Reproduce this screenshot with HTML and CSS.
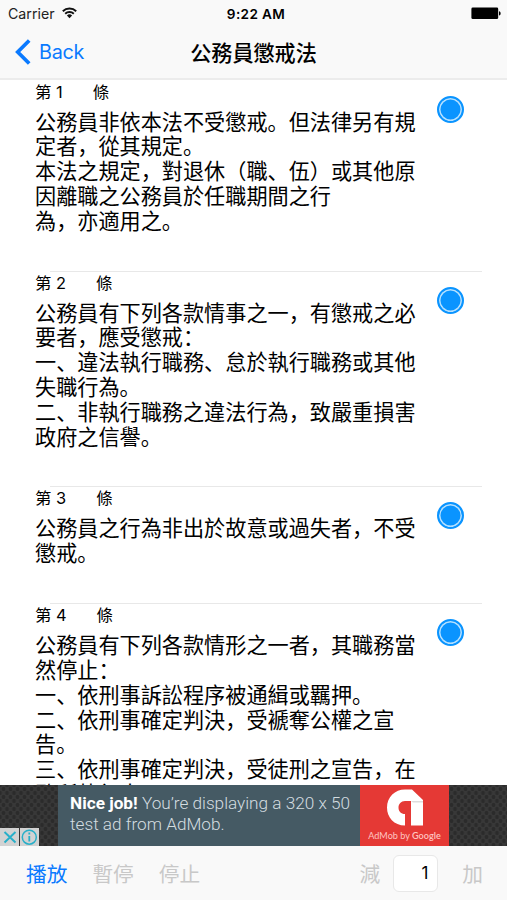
FILE: index.html
```
<!DOCTYPE html>
<html lang="zh-Hans">
<head>
  <meta charset="UTF-8">
  <meta name="viewport" content="width=device-width, initial-scale=1.0">
  <title>公務員懲戒法</title>
  <link rel="stylesheet" href="styles.css">
</head>
<body>

  <div class="app">
      <header class="header">
          <div class="status-bar">
              <div class="carrier">
                  <span>Carrier</span>
                  <svg class="wifi" width="15" height="12" viewBox="0 0 15 12">
                      <path d="M.8 4.2a9.6 9.6 0 0 1 13.4 0M3.2 6.7a6.2 6.2 0 0 1 8.6 0" fill="none" stroke="#111" stroke-width="1.9"/>
                      <path d="M4.9 8.5a3.8 3.8 0 0 1 5.2 0L7.5 11.3z" fill="#111"/>
                  </svg>
              </div>
              <span class="time">9:22 AM</span>
              <svg class="battery" width="30" height="13" viewBox="0 0 30 13">
                  <rect x=".4" y=".5" width="26.8" height="11.6" rx="1.4" fill="#000"/>
                  <path d="M28 4.2c2.2.6 2.2 3.8 0 4.4z" fill="#000"/>
              </svg>
          </div>
          <nav class="nav-bar">
              <a class="back" href="#">
                  <svg width="17" height="26" viewBox="0 0 17 26"><path d="M14.2 1.5 2.7 13l11.5 11.5" fill="none" stroke="#0a7aff" stroke-width="3.7"/></svg>
                  <span>Back</span>
              </a>
              <h1>公務員懲戒法</h1>
          </nav>
      </header>

      <main class="articles">
          <section class="article">
              <div class="text">
                  <h2><span>第 1</span><span>條</span></h2>
                  <p>公務員非依本法不受懲戒。但法律另有規<br>定者，從其規定。<br>本法之規定，對退休（職、伍）或其他原<br>因離職之公務員於任職期間之行<br>為，亦適用之。</p>
              </div>
              <span class="dot"></span>
          </section>
          <section class="article">
              <div class="text">
                  <h2><span>第 2</span><span>條</span></h2>
                  <p>公務員有下列各款情事之一，有懲戒之必<br>要者，應受懲戒：<br>一、違法執行職務、怠於執行職務或其他<br>失職行為。<br>二、非執行職務之違法行為，致嚴重損害<br>政府之信譽。</p>
              </div>
              <span class="dot"></span>
          </section>
          <section class="article">
              <div class="text">
                  <h2><span>第 3</span><span>條</span></h2>
                  <p>公務員之行為非出於故意或過失者，不受<br>懲戒。</p>
              </div>
              <span class="dot"></span>
          </section>
          <section class="article">
              <div class="text">
                  <h2><span>第 4</span><span>條</span></h2>
                  <p>公務員有下列各款情形之一者，其職務當<br>然停止：<br>一、依刑事訴訟程序被通緝或羈押。<br>二、依刑事確定判決，受褫奪公權之宣<br>告。<br>三、依刑事確定判決，受徒刑之宣告，在<br>監所執行中。</p>
              </div>
              <span class="dot"></span>
          </section>
      </main>

      <div class="ad">
          <div class="ad-controls">
              <svg width="19" height="18" viewBox="0 0 19 18"><rect width="19" height="18" fill="#d2d2d2"/><path d="m4.5 4 11 10.5m0-10.5-11 10.5" stroke="#27afc9" stroke-width="1.9"/></svg>
              <svg width="19" height="18" viewBox="0 0 19 18"><rect width="19" height="18" fill="#d2d2d2"/><circle cx="9.3" cy="9.2" r="7" fill="none" stroke="#27afc9" stroke-width="1.5"/><path d="M9.3 8v5.5M9.3 4.5v2" stroke="#27afc9" stroke-width="1.8"/></svg>
          </div>
          <div class="ad-text"><b>Nice job!</b> You’re displaying a 320 x 50<br>test ad from AdMob.</div>
          <div class="ad-logo">
              <svg width="38" height="37" viewBox="0 0 38 37">
                  <path d="M19 36.5C8 36.5 1 28.5 1 18.5 1 8 9 .5 19 .5h7L37 11v25.5H25V12h-6c-4 0-6.5 3-6.5 6.500 0 4 2.500 6.500 6.500 6.500z" fill="#fff"/>
                  <path d="M25 12h12v1.5H27z" fill="#ddd"/>
              </svg>
              <span>AdMob by <b>Google</b></span>
          </div>
      </div>

      <footer class="toolbar">
          <div class="group">
              <button class="active">播放</button>
              <button>暫停</button>
              <button>停止</button>
          </div>
          <div class="group count">
              <button>減</button>
              <input type="text" value="1">
              <button>加</button>
          </div>
      </footer>
  </div>

</body>
</html>
```
FILE: styles.css
```
* {
  margin: 0;
  padding: 0;
  box-sizing: border-box;
}

body {
  font-family: Inter, "Noto Sans CJK SC", sans-serif;
  background-color: #fff;
  color: #000;
}

.app {
  display: flex;
  flex-direction: column;
  width: 507px;
  height: 900px;
  overflow: hidden;
}

.header {
  flex: none;
  height: 80px;
  background-color: #f9f9f9;
  border-bottom: 2px solid #ececec;
}

.status-bar {
  display: grid;
  grid-template-columns: 1fr auto 1fr;
  align-items: center;
  height: 27px;
  padding: 0 6px 0 8px;
}

.carrier {
  display: flex;
  align-items: center;
  gap: 7px;
  font-size: 14.2px;
  color: #222;
}

.wifi {
  margin-top: -2px;
}

.time {
  margin-left: 3px;
  font-size: 13.6px;
  font-weight: 600;
  letter-spacing: 0.35px;
}

.battery {
  justify-self: end;
}

.nav-bar {
  display: grid;
  grid-template-columns: 1fr auto 1fr;
  align-items: center;
  height: 50px;
  padding: 0 15px;
}

.back {
  display: flex;
  align-items: center;
  gap: 7px;
  font-size: 19.8px;
  letter-spacing: -0.3px;
  color: #0a7aff;
  text-decoration: none;
}

h1 {
  font-family: "Noto Sans CJK SC", sans-serif;
  font-size: 21.1px;
  font-weight: 500;
  line-height: 28px;
}

.articles {
  flex: 1;
  min-height: 0;
  overflow: hidden;
}

.article {
  display: flex;
  justify-content: space-between;
  padding: 0 43px 37.5px 35px;
  background: linear-gradient(#e8e8e8, #e8e8e8) 50px 0 / 432px 1px no-repeat;
}

.article:first-child {
  margin-top: -0.5px;
  background: none;
}

h2 {
  display: flex;
  gap: 30px;
  height: 29px;
  font-size: 16.4px;
  font-weight: 400;
  line-height: 25px;
}

.text p {
  font-family: "Noto Sans CJK SC", sans-serif;
  font-size: 21.15px;
  line-height: 24.9px;
  white-space: nowrap;
}

.dot {
  width: 27px;
  height: 27px;
  margin-top: 16px;
  border: 2.5px solid #0a94ff;
  border-radius: 50%;
  background-color: #0a94ff;
  box-shadow: inset 0 0 0 1.5px #b5e0ff;
}

.ad {
  flex: none;
  display: flex;
  height: 61px;
  background-color: #383838;
  background-image: radial-gradient(#2b2b2b 30%, transparent 45%), radial-gradient(#2b2b2b 30%, transparent 45%);
  background-size: 7px 8px;
  background-position: 0 0, 3.5px 4px;
}

.ad-controls {
  display: flex;
  align-items: flex-end;
  gap: 1px;
  width: 58px;
}

.ad-text {
  width: 302px;
  padding: 8px 0 0 12px;
  background-color: #455a64;
  font-family: Roboto, sans-serif;
  font-size: 17.2px;
  font-weight: 300;
  line-height: 21px;
  color: #d4dde0;
  white-space: nowrap;
}

.ad-text b {
  font-weight: 700;
  color: #fff;
}

.ad-logo {
  display: flex;
  flex-direction: column;
  align-items: center;
  width: 89px;
  padding-top: 4px;
  background-color: #e53935;
  font-family: Lato, sans-serif;
  font-size: 9.1px;
  line-height: 20px;
  color: #ffc5c2;
  white-space: nowrap;
}

.ad-logo b {
  font-weight: 600;
}

.toolbar {
  flex: none;
  display: flex;
  justify-content: space-between;
  align-items: center;
  height: 54px;
  padding: 0 24px 0 26px;
  background-color: #f9f9f9;
}

.group {
  display: flex;
  align-items: center;
  gap: 25px;
}

.count {
  gap: 0;
}

.toolbar button {
  border: none;
  background: none;
  font-family: "Noto Sans CJK SC", sans-serif;
  font-size: 20.7px;
  line-height: 28px;
  color: #c8c8c8;
}

.toolbar .active {
  color: #0a7aff;
}

.toolbar input {
  width: 45px;
  height: 37px;
  margin: 0 24px 0 13px;
  padding-right: 9px;
  border: 1px solid #e8e8e8;
  border-radius: 6px;
  background-color: #fff;
  font-family: Inter, sans-serif;
  font-size: 17px;
  text-align: right;
}
```
